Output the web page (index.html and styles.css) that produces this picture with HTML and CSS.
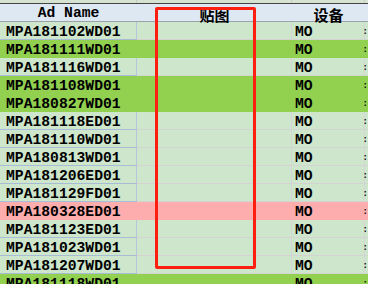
FILE: index.html
```html
<!DOCTYPE html>
<html>
<head>
<meta charset="utf-8">
<link rel="stylesheet" href="styles.css">
</head>
<body>
<div class="sheet">
  <div class="strip"><div class="c c1"></div><div class="c c2"></div><div class="c c3"></div><div class="c c4"></div></div>
  <div class="head">
    <div class="h h1">Ad Name</div>
    <div class="h h2">贴图</div>
    <div class="h h3">设备</div>
    <div class="h h4"></div>
  </div>
  <div class="row light"><div class="c c1">MPA181102WD01</div><div class="c c2"></div><div class="c c3">MO</div><div class="c c4">:</div></div>
  <div class="row green"><div class="c c1">MPA181111WD01</div><div class="c c2"></div><div class="c c3">MO</div><div class="c c4">:</div></div>
  <div class="row light"><div class="c c1">MPA181116WD01</div><div class="c c2"></div><div class="c c3">MO</div><div class="c c4">:</div></div>
  <div class="row green"><div class="c c1">MPA181108WD01</div><div class="c c2"></div><div class="c c3">MO</div><div class="c c4">:</div></div>
  <div class="row green"><div class="c c1">MPA180827WD01</div><div class="c c2"></div><div class="c c3">MO</div><div class="c c4">:</div></div>
  <div class="row light"><div class="c c1">MPA181118ED01</div><div class="c c2"></div><div class="c c3">MO</div><div class="c c4">:</div></div>
  <div class="row light"><div class="c c1">MPA181110WD01</div><div class="c c2"></div><div class="c c3">MO</div><div class="c c4">:</div></div>
  <div class="row light"><div class="c c1">MPA180813WD01</div><div class="c c2"></div><div class="c c3">MO</div><div class="c c4">:</div></div>
  <div class="row light"><div class="c c1">MPA181206ED01</div><div class="c c2"></div><div class="c c3">MO</div><div class="c c4">:</div></div>
  <div class="row light"><div class="c c1">MPA181129FD01</div><div class="c c2"></div><div class="c c3">MO</div><div class="c c4">:</div></div>
  <div class="row pink"><div class="c c1">MPA180328ED01</div><div class="c c2"></div><div class="c c3">MO</div><div class="c c4">:</div></div>
  <div class="row light"><div class="c c1">MPA181123ED01</div><div class="c c2"></div><div class="c c3">MO</div><div class="c c4">:</div></div>
  <div class="row light"><div class="c c1">MPA181023WD01</div><div class="c c2"></div><div class="c c3">MO</div><div class="c c4">:</div></div>
  <div class="row light"><div class="c c1">MPA181207WD01</div><div class="c c2"></div><div class="c c3">MO</div><div class="c c4">:</div></div>
  <div class="row green"><div class="c c1">MPA181118WD01</div><div class="c c2"></div><div class="c c3">MO</div><div class="c c4">:</div></div>
  <div class="mark"></div>
</div>
</body>
</html>
```

FILE: styles.css
```css
html, body {
  margin: 0;
  padding: 0;
  background: #cee6cb;
  overflow: hidden;
}
.sheet {
  position: relative;
  width: 368px;
  height: 284px;
  overflow: hidden;
  font-family: "Liberation Mono", "Noto Sans CJK SC", monospace;
  font-weight: bold;
  font-size: 14.7px;
  color: #000;
}
.strip {
  display: flex;
  height: 3px;
  background: #d6e3d3;
  border-bottom: 1px solid #444;
}
.strip .c { height: 3px; }
.head {
  display: flex;
  height: 17px;
  background: #dde8f3;
  border-bottom: 1px solid #9aa3a8;
}
.h {
  height: 17px;
  line-height: 19px;
  text-align: center;
  flex: none;
}
.h1 { width: 137px; }
.h2 { width: 155px; font-family: "Noto Sans CJK SC", sans-serif; font-size: 15px; line-height: 21px; }
.h3 { width: 73px; font-family: "Noto Sans CJK SC", sans-serif; font-size: 15px; line-height: 21px; }
.h4 { flex: 1; }
.row {
  display: flex;
  height: 18px;
}
.c {
  box-sizing: border-box;
  height: 18px;
  line-height: 18px;
  padding-top: 1px;
  white-space: nowrap;
  flex: none;
}
.c1 { width: 137px; padding-left: 6px; }
.c2 { width: 155px; }
.c3 { width: 73px; padding-left: 3px; }
.c4 { flex: 1; padding-left: 0; font-size: 9px; text-indent: -2.5px; }
.light { background: #cee6cb; }
.light .c1 { border-right: 1px solid #b3c6da; border-bottom: 1px solid #a9bcd6; }
.light .c2, .light .c3 { border-right: 1px solid #d4d4d4; border-bottom: 1px solid #d4d4d4; }
.light .c4 { border-bottom: 1px solid #d4d4d4; }
.strip .c1 { border-right: 1px solid #c2ccc0; }
.strip .c2, .strip .c3 { border-right: 1px solid #c8d0c6; }
.green { background: #92d050; }
.pink { background: #fdadad; }
.mark {
  position: absolute;
  left: 155px;
  top: 7px;
  width: 101px;
  height: 262px;
  box-sizing: border-box;
  border: 3px solid #ff1f10;
  border-radius: 2px;
}
```
